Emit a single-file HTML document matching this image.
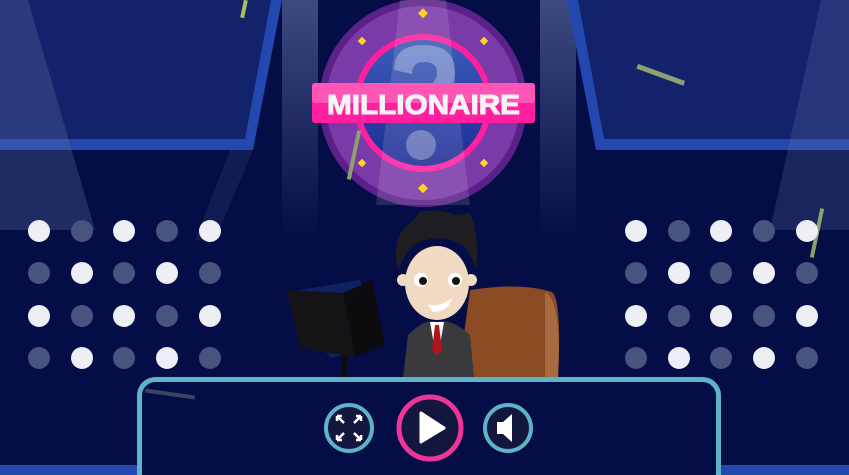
<!DOCTYPE html>
<html><head><style>
body{margin:0;width:849px;height:475px;overflow:hidden;background:#040d45;font-family:"Liberation Sans",sans-serif}
.a{position:absolute}
</style></head><body>
<svg class="a" style="left:0;top:0" width="849" height="475">
<defs>
<linearGradient id="sp" x1="0" y1="0" x2="0" y2="1"><stop offset="0" stop-color="#4a5a90" stop-opacity=".8"/><stop offset="1" stop-color="#4a5a90" stop-opacity="0"/></linearGradient>
<linearGradient id="ib" x1="0" y1="0" x2="0" y2="1"><stop offset="0" stop-color="#3b5cb8"/><stop offset="1" stop-color="#1d2c96"/></linearGradient>
</defs>
<rect x="282" y="0" width="36" height="240" fill="url(#sp)"/>
<rect x="540" y="0" width="36" height="240" fill="url(#sp)"/>
<polygon points="0,0 282,0 253,150 0,150" fill="#2447b0"/>
<polygon points="0,0 271,0 245,139 0,139" fill="#12236b"/>
<polygon points="849,0 567,0 596,150 849,150" fill="#2447b0"/>
<polygon points="849,0 578,0 604,139 849,139" fill="#12236b"/>
<polygon points="0,0 28,0 95,230 0,230" fill="#6070a8" opacity=".3"/>
<polygon points="230,150 253,150 215,240 195,240" fill="#6070a8" opacity=".15"/>
<polygon points="849,0 821,0 770,230 849,230" fill="#6070a8" opacity=".25"/>
<rect x="0" y="465" width="849" height="10" fill="#2447b0"/>
<!-- logo -->
<circle cx="423" cy="103" r="104" fill="#5a2288"/>
<circle cx="423" cy="103" r="97" fill="#7a3aa8"/>
<circle cx="423" cy="103" r="69" fill="#ff1f9f"/>
<circle cx="423" cy="103" r="63" fill="url(#ib)"/>
<polygon points="400,0 446,0 470,205 376,205" fill="#fff" opacity=".12"/>
<g fill="#fff" opacity=".3">
<path d="M394,70 Q394,45 423,45 Q455,45 455,72 Q455,90 438,100 Q430,106 430,118 L413,118 Q412,100 425,90 Q437,82 437,72 Q437,62 424,62 Q412,62 412,74 Z"/>
<circle cx="421" cy="145" r="15"/>
</g>
<g fill="#ffd320">
<rect x="419" y="10" width="7" height="7" transform="rotate(45 423 14)"/>
<rect x="419" y="185" width="7" height="7" transform="rotate(45 423 189)"/>
<rect x="359" y="38" width="6" height="6" transform="rotate(45 362 41)"/>
<rect x="481" y="38" width="6" height="6" transform="rotate(45 484 41)"/>
<rect x="359" y="160" width="6" height="6" transform="rotate(45 362 163)"/>
<rect x="481" y="160" width="6" height="6" transform="rotate(45 484 163)"/>
</g>
<rect x="312" y="83" width="223" height="40" rx="3" fill="#ff1f9f"/>
<rect x="312" y="83" width="223" height="20" rx="3" fill="#ff55b5"/>
<text x="327" y="114" font-size="28" font-weight="bold" fill="#f4f4f4" textLength="193" lengthAdjust="spacingAndGlyphs" stroke="#f4f4f4" stroke-width="1" font-family="Liberation Sans">MILLIONAIRE</text>
<!-- monitor -->
<polygon points="288,292 360,280 385,345 330,358" fill="#1a2c78" opacity=".6"/>
<polygon points="287,290 343,293 355,357 300,348" fill="#141416"/>
<polygon points="343,293 372,280 385,345 355,357" fill="#0c0c0e"/>
<rect x="341" y="355" width="6" height="25" fill="#0c0c0e"/>
<!-- chair -->
<path d="M470,290 Q520,282 552,292 Q562,300 558,378 L458,378 Z" fill="#8a4a22"/>
<path d="M545,292 Q562,300 558,378 L545,378 Z" fill="#a86a40"/>
<!-- character -->
<path d="M403,378 L408,335 Q425,318 437,322 Q452,318 470,335 L474,378 Z" fill="#3a3a3e"/>
<polygon points="430,322 444,322 440,345 434,345" fill="#fff"/>
<polygon points="435,325 439,325 442,350 437,355 432,350" fill="#b2141c"/>
<circle cx="403" cy="280" r="6" fill="#f1dac4"/><circle cx="471" cy="280" r="6" fill="#f1dac4"/>
<ellipse cx="437" cy="283" rx="32" ry="37" fill="#f1dac4"/>
<path d="M398,270 Q390,235 412,222 L420,212 Q440,208 455,215 L470,213 Q480,235 476,270 Q470,250 462,245 Q440,232 415,244 Q405,252 398,270 Z" fill="#1e1e22"/>
<circle cx="421" cy="280" r="7" fill="#fff"/><circle cx="423" cy="281" r="4" fill="#111"/>
<circle cx="455" cy="280" r="7" fill="#fff"/><circle cx="456" cy="281" r="4" fill="#111"/>
<path d="M428,305 Q441,307 452,298 Q448,312 433,312 Z" fill="#fff"/>
<!-- panel -->
<rect x="139.5" y="379.5" width="579" height="110" rx="16" fill="#040d45" stroke="#5fb3c8" stroke-width="5"/>
<circle cx="349" cy="428" r="23" fill="#13173d" stroke="#5fb3c8" stroke-width="4"/>
<g stroke="#fff" stroke-width="2.5" fill="none">
<path d="M337,416 l7,7 M337,416 v5 M337,416 h5"/>
<path d="M361,416 l-7,7 M361,416 v5 M361,416 h-5"/>
<path d="M337,440 l7,-7 M337,440 v-5 M337,440 h5"/>
<path d="M361,440 l-7,-7 M361,440 v-5 M361,440 h-5"/>
</g>
<circle cx="430" cy="428" r="31" fill="#13173d" stroke="#f0359a" stroke-width="5"/>
<path d="M421,413 L444,428 L421,442 Z" fill="#fff" stroke="#fff" stroke-width="3" stroke-linejoin="round"/>
<circle cx="508" cy="428" r="23" fill="#13173d" stroke="#5fb3c8" stroke-width="4"/>
<path d="M497,422 h6 l9,-8 v28 l-9,-8 h-6 Z" fill="#fff"/>
<!-- money -->
<rect x="636" y="72" width="50" height="5" fill="#8fa070" transform="rotate(20 660 74)"/>
<rect x="352" y="130" width="4" height="50" fill="#8fa070" transform="rotate(12 354 155)"/>
<rect x="242" y="0" width="4" height="18" fill="#a8c060" transform="rotate(12 244 9)"/>
<rect x="815" y="208" width="4" height="50" fill="#8fa070" transform="rotate(12 817 233)"/>
<rect x="145" y="392" width="50" height="4" fill="#3a4660" transform="rotate(8 170 394)"/>
</svg>
<svg class="a" style="left:0;top:0" width="849" height="475">
<g fill="#eeeff5">
<circle cx="39" cy="231" r="11"/><circle cx="124" cy="231" r="11"/><circle cx="210" cy="231" r="11"/>
<circle cx="82" cy="273" r="11"/><circle cx="167" cy="273" r="11"/>
<circle cx="39" cy="316" r="11"/><circle cx="124" cy="316" r="11"/><circle cx="210" cy="316" r="11"/>
<circle cx="82" cy="358" r="11"/><circle cx="167" cy="358" r="11"/>
<circle cx="636" cy="231" r="11"/><circle cx="721" cy="231" r="11"/><circle cx="807" cy="231" r="11"/>
<circle cx="679" cy="273" r="11"/><circle cx="764" cy="273" r="11"/>
<circle cx="636" cy="316" r="11"/><circle cx="721" cy="316" r="11"/><circle cx="807" cy="316" r="11"/>
<circle cx="679" cy="358" r="11"/><circle cx="764" cy="358" r="11"/>
</g>
<g fill="#4a5380">
<circle cx="82" cy="231" r="11"/><circle cx="167" cy="231" r="11"/>
<circle cx="39" cy="273" r="11"/><circle cx="124" cy="273" r="11"/><circle cx="210" cy="273" r="11"/>
<circle cx="82" cy="316" r="11"/><circle cx="167" cy="316" r="11"/>
<circle cx="39" cy="358" r="11"/><circle cx="124" cy="358" r="11"/><circle cx="210" cy="358" r="11"/>
<circle cx="679" cy="231" r="11"/><circle cx="764" cy="231" r="11"/>
<circle cx="636" cy="273" r="11"/><circle cx="721" cy="273" r="11"/><circle cx="807" cy="273" r="11"/>
<circle cx="679" cy="316" r="11"/><circle cx="764" cy="316" r="11"/>
<circle cx="636" cy="358" r="11"/><circle cx="721" cy="358" r="11"/><circle cx="807" cy="358" r="11"/>
</g>
</svg>
</body></html>
